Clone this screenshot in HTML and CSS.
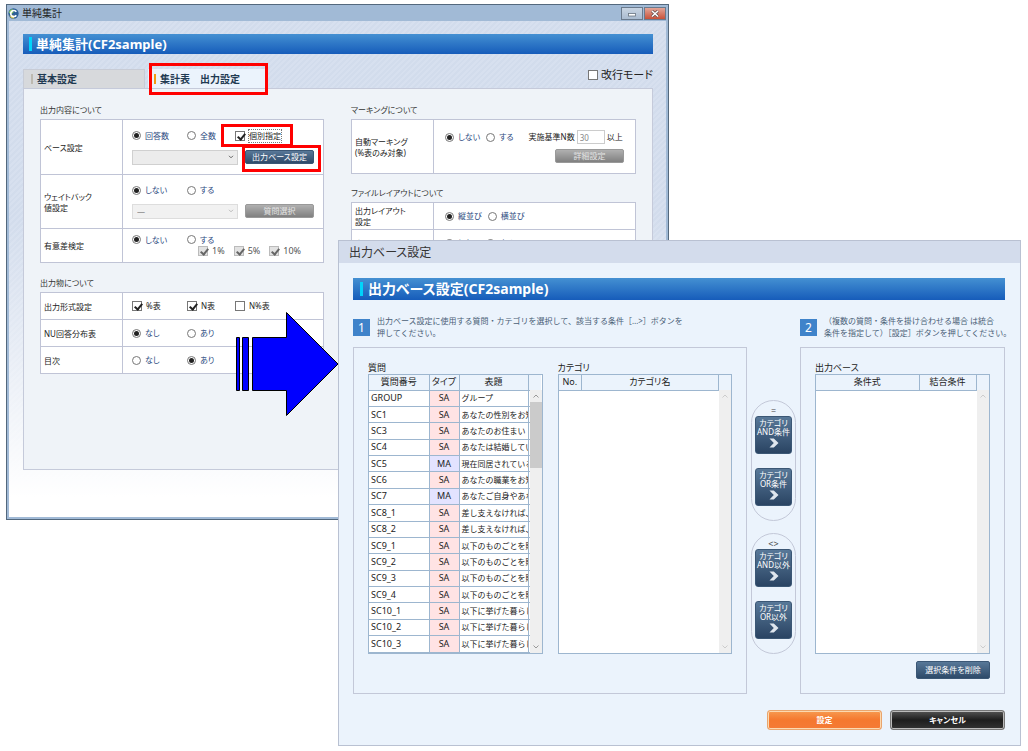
FILE: index.html
```html
<!DOCTYPE html>
<html lang="ja">
<head>
<meta charset="utf-8">
<title>単純集計</title>
<link rel="stylesheet" href="styles.css">
</head>
<body>
<div class="desktop">
  <section class="win main-win">
    <header class="main-title">
      <svg class="app-icon" viewBox="0 0 12 12" width="11" height="11" aria-hidden="true"><circle cx="6" cy="6" r="5.6" fill="#2d5f96"/><path d="M1 4.500A5 5 0 0 1 5 1l1 4-3 2z" fill="#8ccb62"/><path d="M1.500 8.500A5 5 0 0 0 7 11.300L6 8z" fill="#d4c04a"/><path d="M9 4.200A3.300 3.300 0 1 0 9 7.900" fill="none" stroke="#fff" stroke-width="1.800"/></svg>
      <span class="main-name">単純集計</span>
      <button class="win-btn" aria-label="最小化"><svg viewBox="0 0 20 11" width="20" height="11"><rect x="6.500" y="5.500" width="7" height="2.500" fill="#fff" stroke="#68737f" stroke-width=".8"/></svg></button>
      <button class="win-btn close" aria-label="閉じる"><svg viewBox="0 0 20 11" width="20" height="11"><path d="M7 3l6 5.500M13 3L7 8.500" stroke="#5c4648" stroke-width="3"/><path d="M7 3l6 5.500M13 3L7 8.500" stroke="#fff" stroke-width="1.600"/></svg></button>
    </header>
    <div class="main-body">
      <h1 class="bar">単純集計(CF2sample)</h1>
      <div class="tabs">
        <button class="tab">基本設定</button>
        <button class="tab active">集計表　出力設定<span class="mark mark-tab"></span></button>
        <label class="wrap-mode"><input type="checkbox">改行モード</label>
      </div>
      <div class="panel">
        <div class="col">
          <h2 class="sec">出力内容について</h2>
          <table class="form">
            <tr class="h55"><th>ベース設定</th><td>
              <div class="opts"><label><input type="radio" name="base" checked>回答数</label><label><input type="radio" name="base">全数</label><label class="dark marked"><input type="checkbox" checked><span class="focus">個別指定</span><span class="mark mark-check"></span></label></div>
              <div class="pick"><span class="drop"><select aria-label="ベース"><option></option></select><svg viewBox="0 0 6 4"><path d="M1 .8l2 2 2-2"/></svg></span><span class="marked"><button class="btn">出力ベース設定</button><span class="mark mark-btn"></span></span></div>
            </td></tr>
            <tr class="h54"><th>ウェイトバック<br>値設定</th><td>
              <div class="opts"><label><input type="radio" name="wb" checked>しない</label><label><input type="radio" name="wb">する</label></div>
              <div class="pick"><span class="drop off"><select aria-label="ウェイトバック値" disabled><option>―</option></select><svg viewBox="0 0 6 4"><path d="M1 .8l2 2 2-2"/></svg></span><button class="btn gray" disabled>質問選択</button></div>
            </td></tr>
            <tr class="h34"><th>有意差検定</th><td>
              <div class="opts tight"><label><input type="radio" name="sig" checked>しない</label><label><input type="radio" name="sig">する</label></div>
              <div class="levels"><label><input type="checkbox" checked disabled>1%</label><label><input type="checkbox" checked disabled>5%</label><label><input type="checkbox" checked disabled>10%</label></div>
            </td></tr>
          </table>
          <h2 class="sec next">出力物について</h2>
          <table class="form">
            <tr class="h27"><th>出力形式設定</th><td><div class="opts dark"><label><input type="checkbox" checked>%表</label><label><input type="checkbox" checked>N表</label><label><input type="checkbox">N%表</label></div></td></tr>
            <tr class="h27"><th>NU回答分布表</th><td><div class="opts"><label><input type="radio" name="nu" checked>なし</label><label><input type="radio" name="nu">あり</label></div></td></tr>
            <tr class="h27"><th>目次</th><td><div class="opts"><label><input type="radio" name="toc">なし</label><label><input type="radio" name="toc" checked>あり</label></div></td></tr>
          </table>
        </div>
        <div class="col">
          <h2 class="sec">マーキングについて</h2>
          <table class="form">
            <tr class="h54"><th>自動マーキング<br>(%表のみ対象)</th><td>
              <div class="line"><label><input type="radio" name="mk" checked>しない</label><label><input type="radio" name="mk">する</label><label class="dark base-n">実施基準N数<input type="text" value="30" disabled>以上</label></div>
              <div class="right"><button class="btn gray" disabled>詳細設定</button></div>
            </td></tr>
          </table>
          <h2 class="sec layout-sec">ファイルレイアウトについて</h2>
          <table class="form">
            <tr class="h27"><th>出力レイアウト<br>設定</th><td><div class="line"><label><input type="radio" name="lay" checked>縦並び</label><label><input type="radio" name="lay">横並び</label></div></td></tr>
            <tr class="h27"><th>表側出力</th><td><div class="line"><label><input type="radio" name="side" checked>しない</label><label><input type="radio" name="side">する</label></div></td></tr>
          </table>
        </div>
      </div>
    </div>
  </section>

  <section class="win sub-win" role="dialog" aria-label="出力ベース設定">
    <header class="sub-title">出力ベース設定</header>
    <div class="sub-body">
      <h1 class="bar big">出力ベース設定(CF2sample)</h1>
      <div class="grid">
        <div class="step"><b>1</b><p>出力ベース設定に使用する質問・カテゴリを選択して、該当する条件［…&gt;］ボタンを<br>押してください。</p></div>
        <div class="step second"><b>2</b><p>（複数の質問・条件を掛け合わせる場合 は統合<br>条件を指定して）［設定］ボタンを押してください。</p></div>
        <div class="box">
          <div class="list">
            <h2>質問</h2>
            <div class="frame">
              <table class="data questions">
                <colgroup><col class="w60"><col class="w30"><col><col class="w13"></colgroup>
                <thead><tr><th>質問番号</th><th>タイプ</th><th>表題</th><th></th></tr></thead>
                <tbody>
                <tr><td>GROUP</td><td class="sa">SA</td><td class="jp">グループ</td><td></td></tr>
                <tr><td>SC1</td><td class="sa">SA</td><td class="jp">あなたの性別をお知らせ</td><td></td></tr>
                <tr><td>SC3</td><td class="sa">SA</td><td class="jp">あなたのお住まい</td><td></td></tr>
                <tr><td>SC4</td><td class="sa">SA</td><td class="jp">あなたは結婚していますか</td><td></td></tr>
                <tr><td>SC5</td><td class="ma">MA</td><td class="jp">現在同居されている方</td><td></td></tr>
                <tr><td>SC6</td><td class="sa">SA</td><td class="jp">あなたの職業をお知らせ</td><td></td></tr>
                <tr><td>SC7</td><td class="ma">MA</td><td class="jp">あなたご自身やあなたの</td><td></td></tr>
                <tr><td>SC8_1</td><td class="sa">SA</td><td class="jp">差し支えなければ、</td><td></td></tr>
                <tr><td>SC8_2</td><td class="sa">SA</td><td class="jp">差し支えなければ、</td><td></td></tr>
                <tr><td>SC9_1</td><td class="sa">SA</td><td class="jp">以下のものごとを購入</td><td></td></tr>
                <tr><td>SC9_2</td><td class="sa">SA</td><td class="jp">以下のものごとを購入</td><td></td></tr>
                <tr><td>SC9_3</td><td class="sa">SA</td><td class="jp">以下のものごとを購入</td><td></td></tr>
                <tr><td>SC9_4</td><td class="sa">SA</td><td class="jp">以下のものごとを購入</td><td></td></tr>
                <tr><td>SC10_1</td><td class="sa">SA</td><td class="jp">以下に挙げた暮らしに</td><td></td></tr>
                <tr><td>SC10_2</td><td class="sa">SA</td><td class="jp">以下に挙げた暮らしに</td><td></td></tr>
                <tr><td>SC10_3</td><td class="sa">SA</td><td class="jp">以下に挙げた暮らしに</td><td></td></tr>
                <tr><td>&nbsp;</td><td class="sa"></td><td></td><td></td></tr>
                </tbody>
              </table>
              <div class="scroll on"><svg viewBox="0 0 12 12"><path d="M3.500 7.500L6 5l2.500 2.500"/></svg><i></i><svg viewBox="0 0 12 12"><path d="M3.500 4.500L6 7l2.500-2.500"/></svg></div>
            </div>
          </div>
          <div class="list">
            <h2>カテゴリ</h2>
            <div class="frame">
              <table class="data">
                <colgroup><col class="w23"><col><col class="w13"></colgroup>
                <thead><tr><th>No.</th><th>カテゴリ名</th><th></th></tr></thead>
              </table>
              <div class="scroll"><svg viewBox="0 0 12 12"><path d="M3.500 7.500L6 5l2.500 2.500"/></svg><svg viewBox="0 0 12 12"><path d="M3.500 4.500L6 7l2.500-2.500"/></svg></div>
            </div>
          </div>
        </div>
        <div class="moves">
          <div class="pill"><span>=</span>
            <button class="move">カテゴリ<br>AND条件<svg viewBox="0 0 10 10"><path d="M.5.5h4.300L9.500 5 4.800 9.500H.5L4.800 5z"/></svg></button>
            <button class="move">カテゴリ<br>OR条件<svg viewBox="0 0 10 10"><path d="M.5.5h4.300L9.500 5 4.800 9.500H.5L4.800 5z"/></svg></button>
          </div>
          <div class="pill"><span>&lt;&gt;</span>
            <button class="move">カテゴリ<br>AND以外<svg viewBox="0 0 10 10"><path d="M.5.5h4.300L9.500 5 4.800 9.500H.5L4.800 5z"/></svg></button>
            <button class="move">カテゴリ<br>OR以外<svg viewBox="0 0 10 10"><path d="M.5.5h4.300L9.500 5 4.800 9.500H.5L4.800 5z"/></svg></button>
          </div>
        </div>
        <div class="box result">
          <div class="list">
            <h2>出力ベース</h2>
            <div class="frame">
              <table class="data">
                <colgroup><col><col class="w57"><col class="w13"></colgroup>
                <thead><tr><th>条件式</th><th>結合条件</th><th></th></tr></thead>
              </table>
              <div class="scroll"><svg viewBox="0 0 12 12"><path d="M3.500 7.500L6 5l2.500 2.500"/></svg><svg viewBox="0 0 12 12"><path d="M3.500 4.500L6 7l2.500-2.500"/></svg></div>
            </div>
          </div>
          <button class="btn del">選択条件を削除</button>
        </div>
      </div>
      <footer class="actions"><button class="act ok">設定</button><button class="act cancel">キャンセル</button></footer>
    </div>
  </section>

  <svg class="arrow" viewBox="0 0 104 106" width="104" height="106" aria-hidden="true"><g fill="#00f" stroke="#000" stroke-width="1"><path d="M1.500 26.500h3v53h-3zM7.500 26.500h6v53h-6zM17.500 26.500h34V1.500L103 53 51.500 104.500v-25h-34z"/></g></svg>
</div>
</body>
</html>
```

FILE: styles.css
```css
* { box-sizing: border-box; }
body { margin: 0; background: #fff; color: #222; font: 8px/12px "Noto Sans", "Noto Sans CJK JP", sans-serif; font-feature-settings: "palt"; }
h1, h2, p { margin: 0; font-weight: normal; }
h2 { font-size: 9px; }
button, input, select { font: inherit; font-feature-settings: inherit; margin: 0; }
button { cursor: pointer; white-space: nowrap; }

.desktop { position: relative; min-height: 751px; overflow: hidden; }
.win { position: absolute; display: flex; flex-direction: column; }
.main-win { left: 6px; top: 4px; width: 663px; height: 516px; border: 1px solid #53687d; background: #a1bad6; padding: 0 2px 2px; }
.sub-win { left: 338px; right: 7px; top: 240px; height: 506px; border: 1px solid #b9c1d2; background: #ebf3fc; }
.arrow { position: absolute; left: 235px; top: 311px; }

.main-title { display: flex; align-items: center; height: 16px; gap: 1px; }
.main-name { flex: 1; font-size: 10px; padding-left: 2px; }
.win-btn { width: 22px; height: 13px; padding: 0; border: 1px solid #6a7a8d; background: linear-gradient(#c9d5e3, #a9bbd0); line-height: 0; overflow: hidden; }
.win-btn.close { background: linear-gradient(#e3a598, #c8523a); }
.main-title .app-icon { margin-left: -1px; }

.main-body { flex: 1; padding: 13px 13px 47px 14px; display: flex; flex-direction: column;
  background: linear-gradient(rgba(255,255,255,0), rgba(255,255,255,0) 40%, #fff 96%), repeating-linear-gradient(135deg, #d2dcec 0 2px, #d7e0ef 2px 4px); }
.bar { height: 20px; display: flex; align-items: center; padding-left: 6px; font-size: 13px; font-weight: bold; color: #fff; background: linear-gradient(#4490d2, #165cba); }
.bar::before { content: ""; width: 3px; height: 14px; margin-right: 4px; background: #00d4fa; }
.bar.big { height: 22px; padding-left: 7px; font-size: 14px; }
.bar.big::before { margin-right: 5px; }

.tabs { display: flex; align-items: stretch; gap: 3px; height: 19px; margin-top: 15px; }
.tab { display: flex; align-items: center; position: relative; width: 122px; padding: 0 0 0 7px; border: 1px solid #c8ccd6; border-bottom: 0; background: #d7d9dc; color: #1f3a52; font-size: 10px; font-weight: bold; }
.tab::before { content: ""; width: 2px; height: 10px; margin-right: 4px; background: #bdb9b0; }
.tab.active { background: #ebf3fc; border-color: #ebf3fc; width: 120px; padding-left: 5px; }
.tab.active::before { background: #f39a12; }
.wrap-mode { margin-left: auto; display: flex; align-items: center; gap: 3px; font-size: 11px; padding-bottom: 7px; }

.mark { position: absolute; border: 3px solid #f00; pointer-events: none; }
.mark-tab { inset: -7px -1px -7px 0; }
.mark-check { left: -14px; top: -6px; width: 72px; height: 23px; }
.mark-btn { inset: -5px -7px -7px -3px; }
.marked { position: relative; display: flex; }

.panel { flex: 1; display: grid; grid-template-columns: 284px 1fr; gap: 27px; padding: 15px 16px 0; border: 1px solid #c5cada; background: #eff3f8; }
.sec { height: 15px; font-size: 8px; color: #333; }
.sec.next { margin-top: 14px; }
.sec.layout-sec { margin-top: 13px; }
.form { width: 100%; border-collapse: collapse; table-layout: fixed; background: #fff; }
.form th, .form td { border: 1px solid #c0c4d6; padding: 0 0 0 9px; }
.form th { width: 82px; padding-left: 3px; text-align: left; font-weight: normal; line-height: 11px; }
.h55 { height: 55px; } .h54 { height: 54px; } .h34 { height: 34px; } .h27 { height: 27px; }

.opts { display: grid; grid-template-columns: 55px 48px 1fr; color: #2b4a80; }
.opts label, .line label, .levels label { display: flex; align-items: center; gap: 4px; }
.opts .dark, .opts.dark, .line .dark { color: #222; }
.focus { outline: 1px dotted #777; }
.pick { display: flex; gap: 7px; margin-top: 8px; }
.drop { position: relative; display: flex; }
.drop select { width: 106px; height: 15px; padding: 0 4px; border: 1px solid #d0d0d0; background: #ececec; color: #555; appearance: none; }
.drop svg { position: absolute; right: 4px; top: 5px; width: 6px; height: 4px; fill: none; stroke: #666; pointer-events: none; }
.drop.off svg { stroke: #bbb; }
.levels { display: flex; gap: 9px; padding-left: 66px; font-size: 9px; line-height: 12px; color: #555; }
.tight { line-height: 11px; }
.line { display: flex; align-items: center; gap: 6px; color: #2b4a80; padding-left: 2px; }
.line .base-n { margin-left: 9px; gap: 2px; }
.base-n input { width: 28px; height: 14px; border: 1px solid #ccc; padding: 0 2px; background: #fff; color: #888; font-size: 8px; }
.right { display: flex; justify-content: flex-end; padding-right: 11px; margin-top: 5px; }

input[type=radio], input[type=checkbox] { appearance: none; flex: none; position: relative; width: 9px; height: 9px; border: 1px solid #777; background: #fff; }
input[type=radio] { border-radius: 50%; }
input[type=radio]:checked::after { content: ""; position: absolute; inset: 1px; border-radius: 50%; background: #222; }
input[type=checkbox] { width: 10px; height: 10px; }
input[type=checkbox]:checked::after { content: ""; position: absolute; left: 3px; top: 0; width: 3px; height: 6px; border: solid #222; border-width: 0 2px 2px 0; transform: rotate(40deg); }
input[type=checkbox]:disabled { background: #e2e2e2; border-color: #bbb; }
input[type=checkbox]:disabled::after { border-color: #666; }

.btn { width: 69px; height: 14px; padding: 0; border: 1px solid #3b5775; border-radius: 2px; background: linear-gradient(#587898, #2e4a69); color: #fff; line-height: 12px; }
.btn.gray { border-color: #999; background: linear-gradient(#b0b0b0, #808080); color: #e4e4e4; }

.sub-title { height: 22px; padding-left: 10px; font-size: 12px; line-height: 24px; background: #d3dcec; color: #333; }
.sub-body { flex: 1; padding: 15px 15px 0 14px; display: flex; flex-direction: column; }
.grid { display: grid; grid-template-columns: 1fr 53px 205px; grid-template-rows: 32px 347px; margin-top: 15px; }
.step { display: flex; gap: 7px; font-size: 8px; font-feature-settings: normal; color: #4a6076; white-space: nowrap; grid-column: 1 / 3; }
.step.second { grid-column: 3; }
.step b { flex: none; width: 17px; height: 17px; margin-top: 4px; background: #3f83ca; color: #fff; font-size: 12px; font-weight: normal; line-height: 17px; text-align: center; }
.box { display: flex; gap: 15px; border: 1px solid #c3c8d8; padding: 14px; }
.list { flex: 1; min-width: 0; display: flex; flex-direction: column; height: 292px; }
.list h2 { height: 12px; }
.frame { position: relative; height: 280px; overflow: hidden; border: 1px solid #9db6cf; background: #fff; }
.data { width: 100%; border-collapse: collapse; table-layout: fixed; font-size: 9px; line-height: 12px; }
.data th { height: 15px; padding: 0; font-weight: normal; background: #ebf3fc; border-right: 1px solid #9db6cf; border-bottom: 1px solid #9db6cf; }
.data th:last-child { border-right: 0; }
.data td { height: 16px; padding: 0 0 0 2px; border-right: 1px solid #9db6cf; border-bottom: 1px solid #9db6cf; overflow: hidden; white-space: nowrap; }
.data .jp { font-size: 8px; font-feature-settings: normal; }
.questions { height: 294px; }
.data .sa, .data .ma { padding: 0; text-align: center; background: #ffe3e4; }
.data .ma { background: #e3e3ff; }
.w60 { width: 60px; } .w30 { width: 30px; } .w13 { width: 13px; } .w23 { width: 23px; } .w57 { width: 57px; }
.scroll { position: absolute; right: 0; top: 15px; bottom: 0; width: 12px; display: flex; flex-direction: column; justify-content: space-between; background: #efefef; }
.scroll svg { width: 12px; height: 12px; fill: none; stroke: #ccc; }
.scroll.on svg { stroke: #999; }
.scroll i { height: 66px; margin-bottom: auto; background: #cbcbcb; }

.moves { display: flex; flex-direction: column; align-items: center; gap: 12px; padding-top: 53px; }
.pill { width: 45px; height: 121px; border: 1px solid #c3c8d8; border-radius: 23px; display: flex; flex-direction: column; align-items: center; padding-top: 5px; }
.pill span { font-size: 9px; line-height: 10px; color: #444; }
.move { display: flex; flex-direction: column; align-items: center; width: 37px; height: 38px; margin-bottom: 14px; padding: 0; border: 1px solid #3b5775; border-radius: 3px; background: linear-gradient(#587898, #2a4463); color: #fff; font-size: 8px; line-height: 9px; flex: none; }
.move { display: block; }
.move svg { display: block; width: 10px; height: 10px; margin: 2px auto 4px; fill: #dfe6ee; }
.result { flex-direction: column; gap: 7px; }
.result .list { flex: none; }
.btn.del { align-self: flex-end; width: 74px; height: 19px; }

.actions { display: flex; justify-content: flex-end; gap: 8px; margin-top: 16px; }
.act { width: 115px; height: 20px; padding: 0; border: 1px solid #e9a56d; border-radius: 3px; color: #fff; font-weight: bold; font-size: 8px; line-height: 16px; }
.ok { background: linear-gradient(#f79a50, #f5782e 50%, #f57a35); box-shadow: inset 0 0 0 1px #fcd9b0; }
.cancel { border-color: #777; background: linear-gradient(#555, #1d1d1d 50%, #333); box-shadow: inset 0 0 0 1px #bbb; }
```
